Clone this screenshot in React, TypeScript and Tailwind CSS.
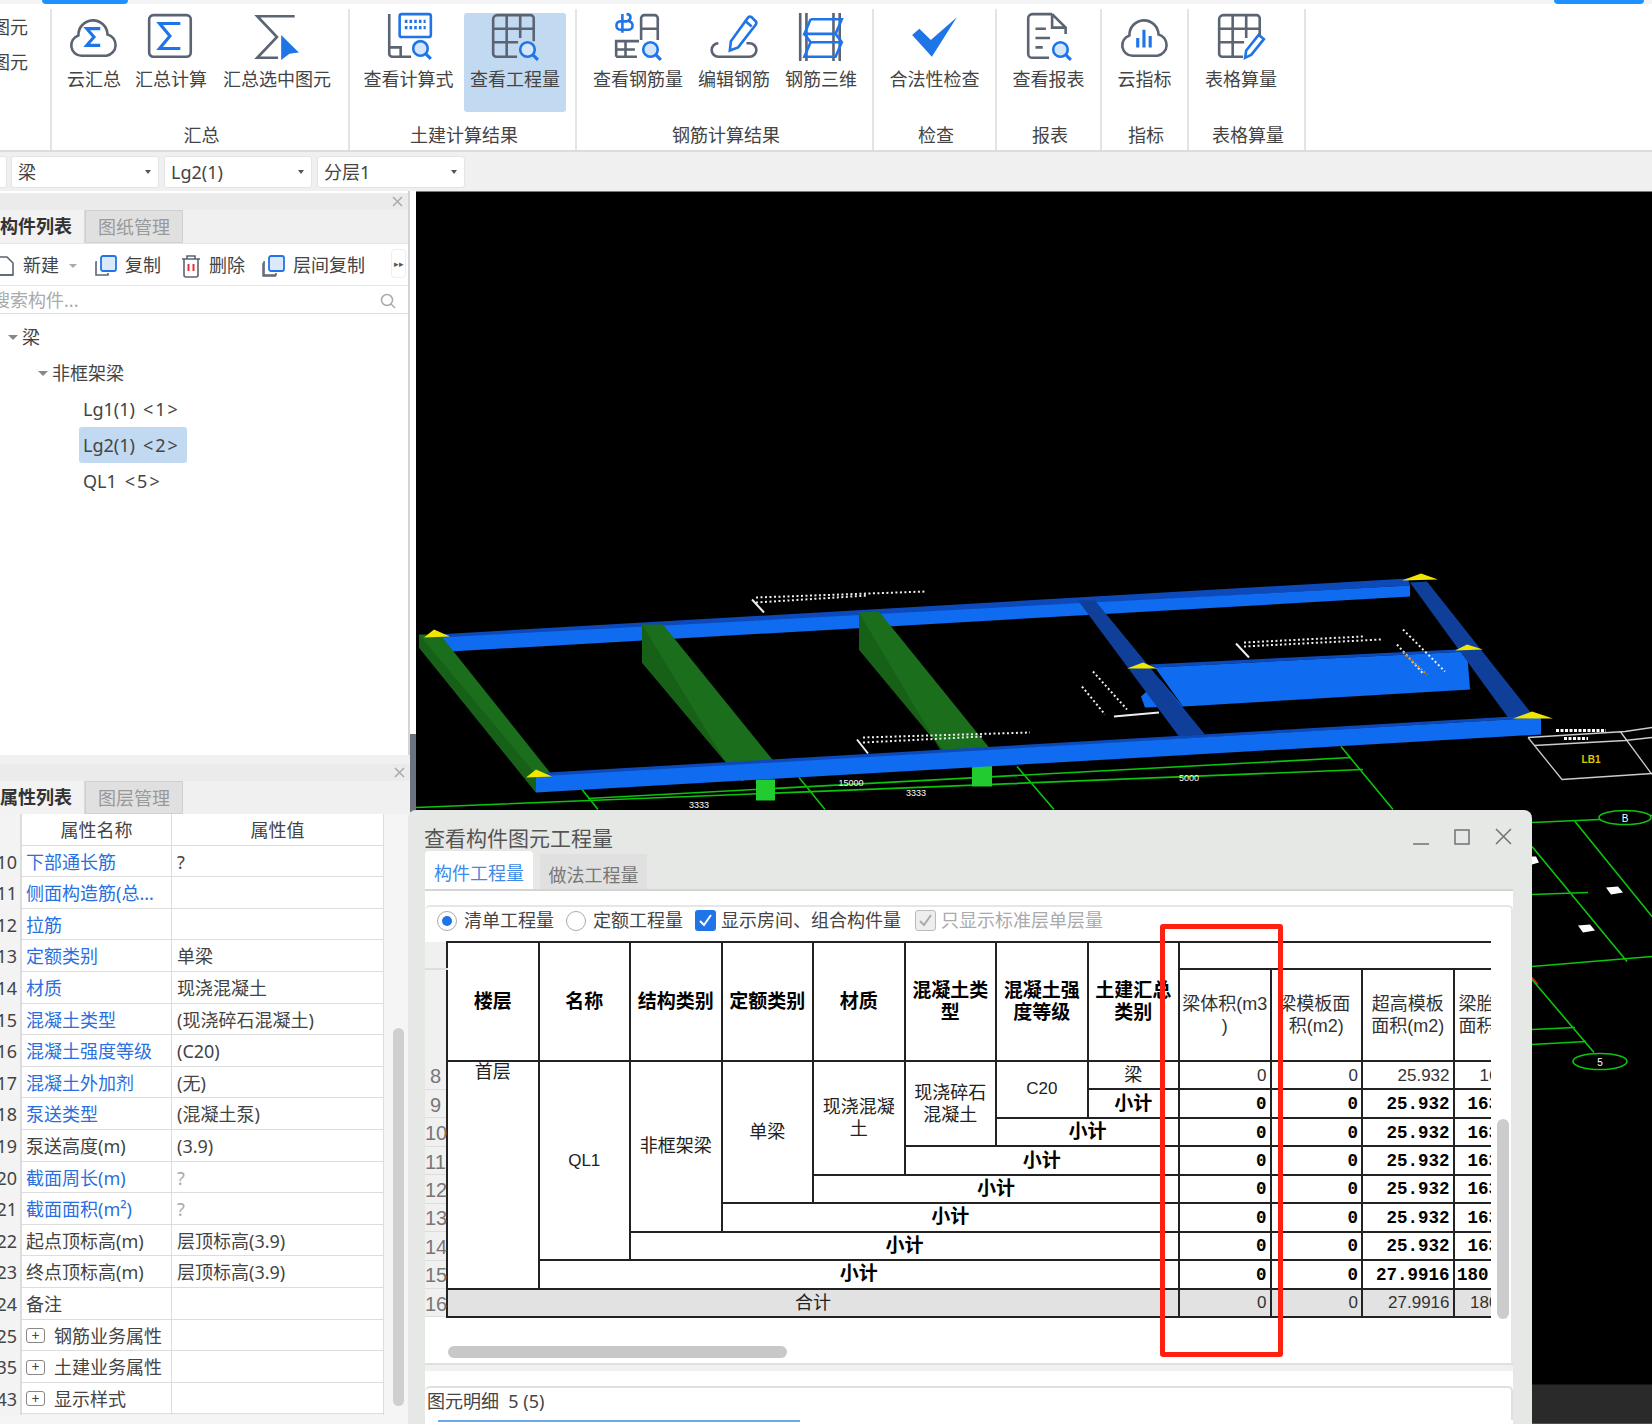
const G = '#5b6472';
const B = '#1f75e8';

function Mag({ x = 36, y = 36 }: { x?: number; y?: number }) {
  return (
    <g fill="none">
      <circle cx={x} cy={y} r="7" stroke={B} strokeWidth="2.5" fill="#d5e6fb" />
      <path d={`M${x + 5} ${y + 5}l5 5`} stroke={B} strokeWidth="3" />
    </g>
  );
}

function Grid() {
  return (
    <path
      d="M8 4h32a3 3 0 0 1 3 3v22M4 8a4 4 0 0 1 4-4M4 8v33a3 3 0 0 0 3 3h20M4 17h39M4 30h24M17 4v40M30 4v22"
      fill="none"
      stroke={G}
      strokeWidth="2.5"
    />
  );
}

const icons: Record<string, React.ReactNode> = {
  cloudSum: (
    <>
      <path d="M13 43a10 10 0 0 1-3-19.5a14 14 0 0 1 28-1a10.5 10.5 0 0 1-1 20.5z" fill="none" stroke={G} strokeWidth="2.5" />
      <path d="M31 17H18l7 8-7 8h13" fill="none" stroke={B} strokeWidth="3" />
    </>
  ),
  boxSum: (
    <>
      <rect x="4" y="4" width="40" height="40" rx="4" fill="none" stroke={G} strokeWidth="2.5" />
      <path d="M34 12H14l10 12-10 12h20" fill="none" stroke={B} strokeWidth="3" />
    </>
  ),
  pickSum: (
    <>
      <path d="M42 5H6l19 20L6 45h20" fill="none" stroke={G} strokeWidth="2.5" />
      <path d="M29 23l17 17-9 1-8 6z" fill={B} />
    </>
  ),
  formula: (
    <>
      <path d="M6 3v38a3 3 0 0 0 3 3h18M6 35h11v9" fill="none" stroke={G} strokeWidth="2.5" />
      <rect x="16" y="3" width="30" height="22" rx="2" fill="#fff" stroke={B} strokeWidth="2.5" />
      <path d="M21 10h20M21 16h20" stroke={B} strokeWidth="3" strokeDasharray="2.5 2" />
      <Mag x={36} y={36} />
    </>
  ),
  quantity: (
    <>
      <Grid />
      <Mag x={37} y={37} />
    </>
  ),
  rebar: (
    <>
      <path d="M14 3c5 0 5 6 0 7h-6c-5 0-5 8 0 8h8c5 0 5-8 0-8M10 3v18" fill="none" stroke={B} strokeWidth="2.5" />
      <path d="M28 28V7a3 3 0 0 1 3-3h10a3 3 0 0 1 3 3v21M28 17h16M4 44V29h22M4 37h18M13 29v15M4 44h20" fill="none" stroke={G} strokeWidth="2.5" />
      <Mag x={37} y={37} />
    </>
  ),
  edit: (
    <>
      <path d="M10 31a6 6 0 0 0 0 13h30a6 6 0 0 0 0-13h-3" fill="none" stroke={G} strokeWidth="2.5" />
      <path d="M22 29l-1 9 8-3 17-22a3 3 0 0 0-1-4l-3-3a3 3 0 0 0-4 1zM35 9l7 6" fill="none" stroke={B} strokeWidth="2.5" />
    </>
  ),
  rebar3d: (
    <>
      <path d="M5 2v46M11 2v46M37 2v46M43 2v46" stroke={G} strokeWidth="2.5" />
      <path d="M15 8h30l-6 14H9l6-14M9 22h30l6 8-6 14H9l6-14h30M9 22l6 8" fill="none" stroke={B} strokeWidth="2.5" />
    </>
  ),
  check: <path d="M3 23l7-6 11 11L46 6 22 44z" fill={B} />,
  report: (
    <>
      <path d="M28 3H9a4 4 0 0 0-4 4v34a4 4 0 0 0 4 4h16M28 3l13 13v6M28 3v13h13" fill="none" stroke={G} strokeWidth="2.5" />
      <path d="M12 17h10M12 26h14M12 35h7" stroke={G} strokeWidth="2.5" />
      <Mag x={36} y={37} />
    </>
  ),
  cloudBars: (
    <>
      <path d="M13 43a10 10 0 0 1-3-19.5a14 14 0 0 1 28-1a10.5 10.5 0 0 1-1 20.5z" fill="none" stroke={G} strokeWidth="2.5" />
      <path d="M18 26v9M24 18v17M30 24v11" stroke={B} strokeWidth="3" />
    </>
  ),
  tablePen: (
    <>
      <Grid />
      <path d="M29 45l1-7 12-15 5 4-12 15z" fill="#fff" stroke={B} strokeWidth="2.5" />
    </>
  ),
};

function RibbonItem({ icon, label, cls, active }: { icon: string; label: string; cls: string; active?: boolean }) {
  return (
    <div className={`flex h-[99px] flex-col items-center rounded-[3px] ${cls} ${active ? 'bg-[#c2d9f2]' : ''}`}>
      <svg width="54" height="52" viewBox="0 0 50 50" className="mt-[-2px]">
        {icons[icon]}
      </svg>
      <span className="mt-[3px] whitespace-nowrap text-[18px] leading-[26px] text-[#444]">{label}</span>
    </div>
  );
}

function RibbonGroup({ label, cls, children }: { label: string; cls: string; children: React.ReactNode }) {
  return (
    <div className={`flex h-[141px] shrink-0 flex-col border-r-2 border-[#e4e4e4] ${cls}`}>
      <div className="flex h-[103px] items-start pt-[4px]">{children}</div>
      <div className="mt-[11px] pl-[3px] text-center text-[18px] leading-[24px] text-[#444]">{label}</div>
    </div>
  );
}

function Ribbon() {
  return (
    <div className="flex h-[148px] items-start border-b-2 border-[#dcdcdc] bg-white pt-[5px]">
      <RibbonGroup label="" cls="w-[52px]">
        <div className="ml-[-8px] mt-[-3px] text-[18px] leading-[35px] text-[#444]">
          <div>图元</div>
          <div>图元</div>
        </div>
      </RibbonGroup>
      <RibbonGroup label="汇总" cls="w-[298px]">
        <div className="w-[7px]" />
        <RibbonItem icon="cloudSum" label="云汇总" cls="w-[70px]" />
        <RibbonItem icon="boxSum" label="汇总计算" cls="w-[84px]" />
        <RibbonItem icon="pickSum" label="汇总选中图元" cls="w-[128px]" />
      </RibbonGroup>
      <RibbonGroup label="土建计算结果" cls="w-[227px]">
        <div className="w-[13px]" />
        <RibbonItem icon="formula" label="查看计算式" cls="w-[91px] mr-[10px]" />
        <RibbonItem icon="quantity" label="查看工程量" cls="w-[102px]" active />
      </RibbonGroup>
      <RibbonGroup label="钢筋计算结果" cls="w-[297px]">
        <div className="w-[11px]" />
        <RibbonItem icon="rebar" label="查看钢筋量" cls="w-[100px]" />
        <RibbonItem icon="edit" label="编辑钢筋" cls="w-[92px]" />
        <RibbonItem icon="rebar3d" label="钢筋三维" cls="w-[82px]" />
      </RibbonGroup>
      <RibbonGroup label="检查" cls="w-[123px]">
        <RibbonItem icon="check" label="合法性检查" cls="w-full" />
      </RibbonGroup>
      <RibbonGroup label="报表" cls="w-[105px]">
        <RibbonItem icon="report" label="查看报表" cls="w-full" />
      </RibbonGroup>
      <RibbonGroup label="指标" cls="w-[87px]">
        <RibbonItem icon="cloudBars" label="云指标" cls="w-full" />
      </RibbonGroup>
      <RibbonGroup label="表格算量" cls="w-[117px]">
        <RibbonItem icon="tablePen" label="表格算量" cls="w-[104px]" />
      </RibbonGroup>
    </div>
  );
}

function Combo({ text }: { text: string }) {
  return (
    <div className="flex h-[32px] w-[148px] items-center justify-between rounded-[3px] border border-[#e4e4e4] bg-white pl-[6px] pr-[7px] text-[18px] text-[#444]">
      <span className="pt-[2px]">{text}</span>
      <span className="h-0 w-0 border-x-[3px] border-t-[4px] border-x-transparent border-t-[#555]" />
    </div>
  );
}

function Tabs({ first, second }: { first: string; second: string }) {
  return (
    <div className="flex h-[33px] bg-[#f0f0f0] text-[18px] leading-[32px]">
      <div className="w-[85px] border-r border-[#d8d8d8] bg-[#f2f2f2] font-bold text-[#333]">{first}</div>
      <div className="w-[98px] border border-[#d0d0d0] bg-[#e0e0e0] text-center text-[#999]">{second}</div>
    </div>
  );
}

function CloseStrip({ cls }: { cls: string }) {
  return (
    <div className={`flex items-center justify-end bg-[#ebebeb] pr-[5px] ${cls}`}>
      <svg width="11" height="11" viewBox="0 0 11 11">
        <path d="M1 1l9 9M10 1l-9 9" stroke="#aaa" strokeWidth="1.5" />
      </svg>
    </div>
  );
}

function ToolIcon({ kind }: { kind: string }) {
  if (kind === 'new') {
    return (
      <svg width="22" height="22" viewBox="0 0 22 22" className="ml-[-5px]">
        <path d="M2 2h10l6 6v12H2" fill="none" stroke="#5b6472" strokeWidth="1.6" />
        <path d="M2 20h16" stroke="#5b6472" strokeWidth="1.6" />
      </svg>
    );
  }
  if (kind === 'delete') {
    return (
      <svg width="22" height="24" viewBox="0 0 22 24">
        <path d="M2 5h18M7 5V2h8v3M4 5v16a2 2 0 0 0 2 2h10a2 2 0 0 0 2-2V5" fill="none" stroke="#5b6472" strokeWidth="1.6" />
        <path d="M8.5 10v7M13.5 10v7" stroke="#e5303a" strokeWidth="2" />
      </svg>
    );
  }
  return (
    <svg width="24" height="24" viewBox="0 0 24 24">
      {kind === 'layer' && <path d="M1 9v13h13" fill="none" stroke="#5b6472" strokeWidth="1.4" />}
      <path d="M3 8H2v13h12v-2" fill="none" stroke="#5b6472" strokeWidth="1.6" />
      <rect x="7" y="2" width="15" height="15" rx="2" fill="#dbe9fb" stroke="#1f75e8" strokeWidth="1.8" />
    </svg>
  );
}

function Tag({ text }: { text: string }) {
  return <span className="ml-[8px] tracking-[2px]">{text}</span>;
}

function TreePanel() {
  return (
    <div className="flex h-[564px] flex-col border-r-2 border-[#d4d4d4] bg-white">
      <CloseStrip cls="mt-[2px] h-[17px]" />
      <Tabs first="构件列表" second="图纸管理" />
      <div className="relative flex h-[43px] items-center border-y border-[#e6e6e6] pt-[2px] text-[18px] text-[#444]">
        <ToolIcon kind="new" />
        <span className="ml-[6px]">新建</span>
        <span className="ml-[10px] mr-[17px] h-0 w-0 border-x-[4px] border-t-[4px] border-x-transparent border-t-[#aaa]" />
        <ToolIcon kind="copy" />
        <span className="ml-[7px] mr-[19px]">复制</span>
        <ToolIcon kind="delete" />
        <span className="ml-[7px] mr-[17px]">删除</span>
        <ToolIcon kind="layer" />
        <span className="ml-[7px]">层间复制</span>
        <div className="absolute left-[391px] top-[5px] flex h-[29px] w-[15px] items-center justify-center rounded-[4px] border border-[#eee] text-[9px] text-[#555]">
          ▸▸
        </div>
      </div>
      <div className="flex h-[28px] items-center justify-between border-b border-[#e0e0e0] pr-[12px] pt-[2px] text-[18px] text-[#aaa]">
        <span className="ml-[-8px]">搜索构件...</span>
        <svg width="16" height="16" viewBox="0 0 16 16">
          <circle cx="7" cy="7" r="5.5" fill="none" stroke="#aaa" strokeWidth="1.5" />
          <path d="M11 11l4 4" stroke="#aaa" strokeWidth="1.5" />
        </svg>
      </div>
      <div className="pt-[5px] text-[18px] leading-[36px] text-[#444]">
        <div className="flex items-center pl-[8px]">
          <span className="mr-[4px] h-0 w-0 border-x-[5px] border-t-[5px] border-x-transparent border-t-[#888]" />梁
        </div>
        <div className="flex items-center pl-[38px]">
          <span className="mr-[4px] h-0 w-0 border-x-[5px] border-t-[5px] border-x-transparent border-t-[#888]" />非框架梁
        </div>
        <div className="pl-[83px]">Lg1(1)<Tag text="<1>" /></div>
        <div className="ml-[79px] w-[108px] rounded-[3px] bg-[#c2d9f2] pl-[4px]">Lg2(1)<Tag text="<2>" /></div>
        <div className="pl-[83px]">QL1<Tag text="<5>" /></div>
      </div>
    </div>
  );
}

const props: { no: string; name: string; val?: string; blue?: boolean; dim?: boolean; plus?: boolean }[] = [
  { no: '10', name: '下部通长筋', val: '?', blue: true },
  { no: '11', name: '侧面构造筋(总...', blue: true },
  { no: '12', name: '拉筋', blue: true },
  { no: '13', name: '定额类别', val: '单梁', blue: true },
  { no: '14', name: '材质', val: '现浇混凝土', blue: true },
  { no: '15', name: '混凝土类型', val: '(现浇碎石混凝土)', blue: true },
  { no: '16', name: '混凝土强度等级', val: '(C20)', blue: true },
  { no: '17', name: '混凝土外加剂', val: '(无)', blue: true },
  { no: '18', name: '泵送类型', val: '(混凝土泵)', blue: true },
  { no: '19', name: '泵送高度(m)', val: '(3.9)' },
  { no: '20', name: '截面周长(m)', val: '?', blue: true, dim: true },
  { no: '21', name: '截面面积(m²)', val: '?', blue: true, dim: true },
  { no: '22', name: '起点顶标高(m)', val: '层顶标高(3.9)' },
  { no: '23', name: '终点顶标高(m)', val: '层顶标高(3.9)' },
  { no: '24', name: '备注' },
  { no: '25', name: '钢筋业务属性', plus: true },
  { no: '35', name: '土建业务属性', plus: true },
  { no: '43', name: '显示样式', plus: true },
];

function PropPanel() {
  return (
    <div className="relative h-[660px] bg-[#f5f5f5]">
      <CloseStrip cls="h-[17px]" />
      <Tabs first="属性列表" second="图层管理" />
      <div className="w-[384px] bg-white text-[18px] leading-[32px] text-[#444]">
        <div className="grid h-[31.6px] grid-cols-[22px_150px_212px] border-b border-[#ddd]">
          <div className="border-r-2 border-[#ddd] bg-[#f3f3f3]" />
          <div className="border-r border-[#ddd] text-center">属性名称</div>
          <div className="border-r border-[#ddd] text-center">属性值</div>
        </div>
        {props.map(p => (
          <div key={p.no} className="grid h-[31.6px] grid-cols-[22px_150px_212px] border-b border-[#ddd]">
            <div className="flex justify-end overflow-hidden border-r-2 border-[#ddd] bg-[#f3f3f3] pr-[3px]">{p.no}</div>
            <div className={`flex items-center whitespace-nowrap border-r border-[#ddd] pl-[4px] ${p.blue ? 'text-[#2a6fe0]' : ''}`}>
              {p.plus && (
                <span className="mr-[9px] flex h-[15px] w-[19px] items-center justify-center rounded-[3px] border border-[#888] text-[14px] leading-none">
                  +
                </span>
              )}
              {p.name}
            </div>
            <div className={`whitespace-nowrap border-r border-[#ddd] pl-[5px] ${p.dim ? 'text-[#aaa]' : ''}`}>{p.val}</div>
          </div>
        ))}
      </div>
      <div className="absolute left-[393px] top-[264px] h-[378px] w-[11px] rounded-full bg-[#cfcfcf]" />
    </div>
  );
}

function Scene() {
  return (
    <svg viewBox="416 192 1236 1232" className="block h-full w-full" fontFamily="Liberation Sans, sans-serif">
      <rect x="416" y="192" width="1236" height="1232" fill="#000" />
      <rect x="1500" y="1385" width="152" height="39" fill="#2a2a2a" />

      {/* axis lines */}
      <g stroke="#0dc40d" strokeWidth="1.6" fill="none">
        <path d="M416 808L1363 770M588 799L1351 758M582 790L598 810M799 778L825 810M1017 767L1054 810M1341 747L1393 810" />
        <path d="M1532 823L1600 820M1650 816H1652M1575 822L1652 917M1532 847L1627 962M1532 895L1588 893M1532 967L1652 957M1532 1030L1575 1028M1532 1045L1586 1042M1532 980L1594 1053" />
        <ellipse cx="1625" cy="818" rx="26" ry="7" />
        <ellipse cx="1600" cy="1062" rx="27" ry="8" />
      </g>
      <path d="M1532 978L1538 985" stroke="#d22" strokeWidth="1.5" />
      <g fill="#fff">
        <path d="M1606 888l12-1 5 6-12 2zM1578 926l12-1 5 6-12 2zM1532 857l4 0 3 6-7 2z" />
        <text x="699" y="808" fontSize="9" textAnchor="middle">3333</text>
        <text x="916" y="796" fontSize="9" textAnchor="middle">3333</text>
        <text x="851" y="786" fontSize="9" textAnchor="middle">15000</text>
        <text x="1189" y="781" fontSize="9" textAnchor="middle">5000</text>
        <text x="1625" y="822" fontSize="10" textAnchor="middle">B</text>
        <text x="1600" y="1066" fontSize="10" textAnchor="middle">5</text>
      </g>

      {/* plan box at the right */}
      <path d="M1528 738L1625 732L1652 728M1534 746L1625 741L1652 738M1528 738L1562 780L1652 774M1621 733L1652 775" fill="none" stroke="#ccc" strokeWidth="1.3" />
      <path d="M1556 731h50M1564 739h24" stroke="#fff" strokeWidth="3" strokeDasharray="3 1.5" />
      <text x="1591" y="763" fontSize="10" fontWeight="bold" fill="#d8c800" textAnchor="middle">LB1</text>

      {/* middle wide beam */}
      <path d="M1141 697L1145 708L1183 707L1160 680Z" fill="#0f6cf0" />
      <path d="M1149 665L1457 650L1467 652L1155 668Z" fill="#0d49b8" />
      <path d="M1155 668L1467 652L1470 690L1183 707Z" fill="#0f6cf0" />

      {/* back beam sits under the cross beams */}
      <path d="M436 635L1408 579L1410 586L440 640Z" fill="#0d49b8" />
      <path d="M440 638L1410 586V597L450 652Z" fill="#0f6cf0" />

      {/* green beams */}
      <path d="M419 635H440L550 773L536 793L419 648Z" fill="#1b6e1b" />
      <path d="M419 635V648L536 793L540 780Z" fill="#176017" />
      <path d="M642 625H663L774 762L742 782L642 663Z" fill="#1b6e1b" />
      <path d="M642 625V663L742 782L726 763Z" fill="#176017" />
      <rect x="756" y="780" width="19" height="21" fill="#22cc2e" />
      <path d="M859 613L879 612L989 748L957 768L859 650Z" fill="#1b6e1b" />
      <path d="M859 613V650L957 768L940 750Z" fill="#176017" />
      <rect x="972" y="766" width="20" height="21" fill="#22cc2e" />

      {/* dark blue beams */}
      <path d="M1078 601H1095L1205 735L1179 737Z" fill="#0f3f99" />
      <path d="M1410 583L1427 582L1534 717L1508 718Z" fill="#0f3f99" />

      {/* front beam */}
      <path d="M548 773L1530 716L1541 718L536 778Z" fill="#0d49b8" />
      <path d="M536 777L1541 718V735L536 793Z" fill="#0f6cf0" />

      {/* yellow corner marks */}
      <g fill="#f2e600">
        <path d="M424 638L434 630L450 637Z" />
        <path d="M526 778L536 770L552 777Z" />
        <path d="M1402 581L1421 574L1438 580Z" />
        <path d="M1455 651L1467 645L1483 650Z" />
        <path d="M1127 669L1143 663L1157 669Z" />
        <path d="M1513 719L1532 712L1553 719Z" />
      </g>

      {/* leaders and their small labels */}
      <g fill="none" stroke="#eee">
        <path d="M752 600L764 613M857 740L868 754M1236 644L1249 658M1114 717L1159 713" strokeWidth="2" />
        <g strokeWidth="2" strokeDasharray="2 2.5">
          <path d="M756 598L926 592M756 603L868 596M863 738L1030 733M863 743L983 737M1244 643L1363 637M1244 647L1381 640" />
          <path d="M1403 630L1445 672M1397 645L1424 675M1093 672L1127 710M1082 687L1105 715" />
        </g>
        <path d="M1403 653L1427 675" stroke="#d98a20" strokeWidth="2" strokeDasharray="2 2" />
      </g>
    </svg>
  );
}

const hdr = 'border-2 border-[#222] text-center text-[19px] font-bold leading-[20px] text-black';
const cell = 'border-2 border-[#222] text-center font-normal leading-[20px] text-[#222]';
const num = 'border-2 border-[#222] pr-[3px] pt-[1px] text-right leading-[20px]';
const sub = 'border-2 border-[#222] px-0 text-center text-[18px] font-normal leading-[22px] text-[#333]';
const rowNo = 'border-b border-[#ddd] bg-[#f0f0f0] pt-[2px] text-center text-[20px] font-normal leading-[22px] text-[#777]';

function Nums({ a, b, bold, gray }: { a: string; b: string; bold?: boolean; gray?: boolean }) {
  const tone = bold
    ? "font-['Liberation_Mono',monospace] text-[17.5px] font-bold text-black"
    : 'font-normal text-[#333]';
  const bg = gray ? 'bg-[#e2e2e2]' : '';
  return (
    <>
      <td className={`${num} ${tone} ${bg}`}>0</td>
      <td className={`${num} ${tone} ${bg}`}>0</td>
      <td className={`${num} ${tone} ${bg}`}>{a}</td>
      <td className={`${num} ${tone} ${bg}`}>{b}</td>
    </>
  );
}

function SummaryRow({ no, span }: { no: number; span: number }) {
  return (
    <tr className="h-[28.44px]">
      <td className={rowNo}>{no}</td>
      <td colSpan={span} className={hdr}>小计</td>
      {no === 15 ? <Nums a="27.9916" b="180.4416" bold /> : <Nums a="25.932" b="163.656" bold />}
    </tr>
  );
}

function QuantityTable() {
  return (
    <table className="w-[1120px] table-fixed border-collapse font-['Liberation_Sans','Noto_Sans_CJK_SC',sans-serif] text-[17px]">
      <colgroup>
        <col className="w-[22px]" />
        <col span={12} className="w-[91.5px]" />
      </colgroup>
      <thead>
        <tr className="h-[27px]">
          <th className="border-b-2 border-[#ddd] bg-[#f0f0f0]" />
          {['楼层', '名称', '结构类别', '定额类别', '材质', '混凝土类型', '混凝土强度等级', '土建汇总类别'].map(t => (
            <th key={t} rowSpan={2} className={`${hdr} px-[2px] leading-[22px]`}>{t}</th>
          ))}
          <th colSpan={4} className="border-2 border-r-0 border-[#222]" />
        </tr>
        <tr className="h-[92px]">
          <th className="bg-[#f0f0f0]" />
          <th className={sub}>梁体积(m3<br />)</th>
          <th className={sub}>
            <span className="ml-[-4px] whitespace-nowrap">梁模板面</span>
            <br />积(m2)
          </th>
          <th className={sub}>超高模板<br />面积(m2)</th>
          <th className={`${sub} pl-[4px] text-left`}>梁胎模板<br />面积(m2)</th>
        </tr>
      </thead>
      <tbody>
        <tr className="h-[28.44px]">
          <td className={rowNo}>8</td>
          <td rowSpan={8} className={`${cell} align-top text-[18px]`}>首层</td>
          <td rowSpan={7} className={cell}>QL1</td>
          <td rowSpan={6} className={`${cell} text-[18px]`}>非框架梁</td>
          <td rowSpan={5} className={`${cell} text-[18px]`}>单梁</td>
          <td rowSpan={4} className={`${cell} px-[4px] text-[18px] leading-[22px]`}>现浇混凝土</td>
          <td rowSpan={3} className={`${cell} px-[4px] text-[18px] leading-[22px]`}>现浇碎石混凝土</td>
          <td rowSpan={2} className={cell}>C20</td>
          <td className={`${cell} text-[18px]`}>梁</td>
          <Nums a="25.932" b="163.656" />
        </tr>
        <tr className="h-[28.44px]">
          <td className={rowNo}>9</td>
          <td className={hdr}>小计</td>
          <Nums a="25.932" b="163.656" bold />
        </tr>
        {[10, 11, 12, 13, 14, 15].map(no => (
          <SummaryRow key={no} no={no} span={no - 8} />
        ))}
        <tr className="h-[28.44px]">
          <td className={rowNo}>16</td>
          <td colSpan={8} className={`${cell} bg-[#e2e2e2] text-[18px]`}>合计</td>
          <Nums a="27.9916" b="180.4416" gray />
        </tr>
      </tbody>
    </table>
  );
}

function Dialog() {
  return (
    <div className="absolute left-[408px] top-[810px] flex h-[614px] w-[1124px] flex-col rounded-t-[8px] bg-[#e6e8e6] pl-[17px] pr-[19px]">
      <div className="flex h-[43px] items-start justify-between">
        <span className="ml-[-1px] pt-[13px] text-[21px] leading-[30px] text-[#555]">查看构件图元工程量</span>
        <svg width="100" height="20" viewBox="0 0 100 20" className="mt-[17px]">
          <path d="M0 17h16M42 3h14v14H42zM83 2l15 15M98 2L83 17" fill="none" stroke="#6f7377" strokeWidth="1.5" />
        </svg>
      </div>
      <div className="flex h-[38px] items-end border-b-2 border-[#d4d4d4] text-[18px]">
        <div className="h-[38px] w-[108px] rounded-t-[4px] bg-white text-center leading-[44px] text-[#3d8be8]">构件工程量</div>
        <div className="ml-[7px] h-[35px] w-[107px] bg-[#e0e0e0] text-center leading-[42px] text-[#777]">做法工程量</div>
      </div>
      <div className="flex flex-1 flex-col bg-white pt-[14px]">
        <div className="relative flex h-[458px] flex-col rounded-t-[5px] border-r-2 border-t-2 border-[#e6e6e6]">
          <div className="flex h-[34px] items-center pb-[7px] pl-[12px] text-[18px] text-[#444]">
            <span className="flex h-[20px] w-[20px] items-center justify-center rounded-full border border-[#aaa]">
              <span className="h-[10px] w-[10px] rounded-full bg-[#1f75e8]" />
            </span>
            <span className="ml-[7px]">清单工程量</span>
            <span className="ml-[12px] h-[20px] w-[20px] rounded-full border border-[#aaa]" />
            <span className="ml-[7px]">定额工程量</span>
            <span className="ml-[12px] flex h-[21px] w-[21px] items-center justify-center rounded-[3px] bg-[#1f75e8]">
              <svg width="15" height="15" viewBox="0 0 15 15">
                <path d="M2 8l4 4 7-10" fill="none" stroke="#fff" strokeWidth="2" />
              </svg>
            </span>
            <span className="ml-[5px]">显示房间、组合构件量</span>
            <span className="ml-[14px] flex h-[21px] w-[21px] items-center justify-center rounded-[3px] border border-[#bbb] bg-[#eee]">
              <svg width="15" height="15" viewBox="0 0 15 15">
                <path d="M2 8l4 4 7-10" fill="none" stroke="#aaa" strokeWidth="2" />
              </svg>
            </span>
            <span className="ml-[5px] text-[#aaa]">只显示标准层单层量</span>
          </div>
          <div className="w-[1066px] overflow-hidden">
            <QuantityTable />
          </div>
          <div className="ml-[23px] mt-[28px] h-[12px] w-[339px] rounded-full bg-[#c8c8c8]" />
          <div className="absolute left-[1072px] top-[212px] h-[200px] w-[12px] rounded-full bg-[#cccccc]" />
        </div>
        <div className="h-[8px] border-t-2 border-[#e0e0e0] bg-[#f0f0f0]" />
        <div className="h-[15px]" />
        <div className="flex h-[34px] items-center rounded-t-[5px] border-r-2 border-t-2 border-[#e0e0e0] pb-[6px] pl-[2px] text-[18px] text-[#444]">
          图元明细&nbsp;&nbsp;5 (5)
        </div>
        <div className="ml-[13px] h-[2px] w-[362px] bg-[#6aa8e8]" />
      </div>
    </div>
  );
}

export default function App() {
  return (
    <div className="relative h-[1424px] w-[1652px] overflow-hidden bg-[#f0f0f0] font-['Noto_Sans','Noto_Sans_CJK_SC',sans-serif]">
      <div className="flex h-[4px] bg-[#f4f4f4]">
        <div className="ml-[42px] w-[86px] rounded-b-[6px] bg-[#1e90ff]" />
        <div className="ml-[1426px] w-[90px] rounded-b-[6px] bg-[#1e90ff]" />
      </div>
      <Ribbon />
      <div className="flex h-[39px] items-center gap-[5px] pl-[11px]">
        <div className="absolute left-[-140px] h-[32px] w-[147px] rounded-[3px] border border-[#e4e4e4] bg-white" />
        <Combo text="梁" />
        <Combo text="Lg2(1)" />
        <Combo text="分层1" />
      </div>
      <div className="flex h-[1233px]">
        <div className="w-[410px] shrink-0">
          <TreePanel />
          <div className="h-[9px]" />
          <PropPanel />
        </div>
        <div className="flex w-[6px] shrink-0 flex-col">
          <div className="h-[543px] bg-white" />
          <div className="flex-1 bg-[#6b7280]" />
        </div>
        <div className="flex-1">
          <Scene />
        </div>
      </div>
      <Dialog />
      {/* red annotation box drawn over the table */}
      <div className="absolute left-[1160px] top-[924px] h-[433px] w-[123px] rounded-[3px] border-[5px] border-[#ff2010]" />
    </div>
  );
}
